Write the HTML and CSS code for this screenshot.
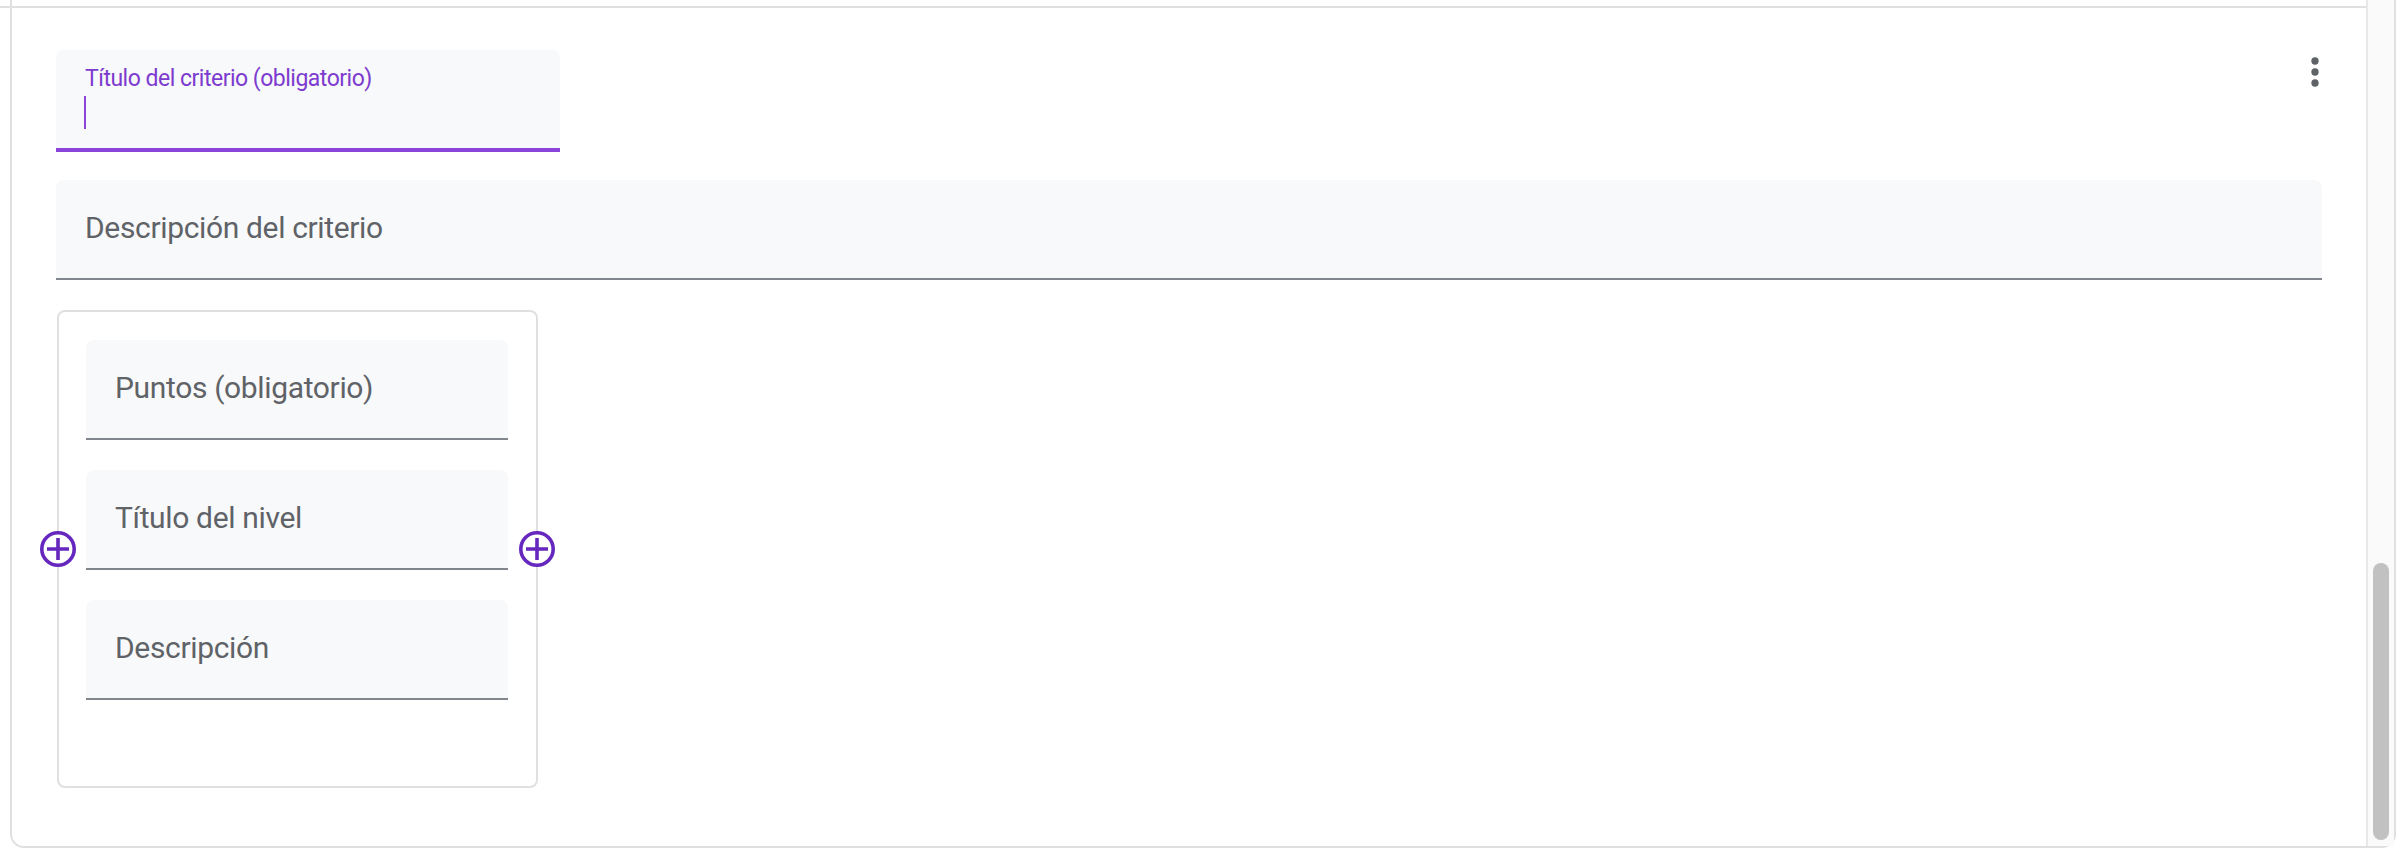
FILE: index.html
```html
<!DOCTYPE html>
<html lang="es">
<head>
<meta charset="utf-8">
<title>Criterio</title>
<link rel="stylesheet" href="styles.css">
</head>
<body>
<div class="frame">
  <div class="content">
    <div class="divider"></div>
    <div class="row-top">
      <div class="field field-focused title-field">
        <span class="float-label">Título del criterio (obligatorio)</span>
        <span class="caret"></span>
      </div>
      <button class="kebab" aria-label="Más opciones">
        <svg width="44" height="44" viewBox="0 0 24 24"><circle cx="12" cy="6" r="2"/><circle cx="12" cy="12" r="2"/><circle cx="12" cy="18" r="2"/></svg>
      </button>
    </div>
    <div class="field desc-field"><span class="placeholder">Descripción del criterio</span></div>
    <div class="level">
      <div class="field"><span class="placeholder">Puntos (obligatorio)</span></div>
      <div class="field"><span class="placeholder">Título del nivel</span></div>
      <div class="field"><span class="placeholder">Descripción</span></div>
      <button class="add add-left" aria-label="Añadir nivel antes">
        <svg width="40" height="40" viewBox="0 0 40 40"><circle cx="20" cy="20" r="16.2"/><path d="M9 20h22M20 9v22"/></svg>
      </button>
      <button class="add add-right" aria-label="Añadir nivel después">
        <svg width="40" height="40" viewBox="0 0 40 40"><circle cx="20" cy="20" r="16.2"/><path d="M9 20h22M20 9v22"/></svg>
      </button>
    </div>
  </div>
  <div class="scrollbar"><div class="thumb"></div></div>
</div>
</body>
</html>
```

FILE: styles.css
```css
html, body {
  margin: 0;
  padding: 0;
  background: #ffffff;
  font-family: Roboto, "Noto Sans", "Liberation Sans", sans-serif;
}

.frame {
  box-sizing: border-box;
  margin-left: 10px;
  width: 2386px;
  height: 848px;
  display: flex;
  border-left: 2px solid #e0e0e0;
  border-right: 2px solid #e0e0e0;
  border-bottom: 2px solid #e0e0e0;
  border-radius: 0 0 14px 14px;
}

.content {
  flex: 1;
  min-width: 0;
  padding: 0 44px;
  display: flex;
  flex-direction: column;
  align-items: flex-start;
}

.divider {
  align-self: stretch;
  height: 2px;
  margin: 6px -44px 0 -56px;
  background: #e0e0e0;
}

.row-top {
  align-self: stretch;
  margin-top: 42px;
  display: flex;
  justify-content: space-between;
  align-items: flex-start;
}

.field {
  box-sizing: border-box;
  height: 100px;
  background: #f8f9fa;
  border-bottom: 2px solid #80868b;
  border-radius: 8px 8px 0 0;
  padding: 30px 28px 0 29px;
}

.placeholder {
  display: block;
  font-size: 30px;
  line-height: 36px;
  letter-spacing: -0.35px;
  color: #5f6368;
  white-space: nowrap;
}

.title-field {
  width: 504px;
  height: 102px;
  border-bottom: 4px solid #8c43d9;
  padding-top: 15px;
}

.float-label {
  display: block;
  font-size: 23px;
  line-height: 27px;
  letter-spacing: -0.5px;
  color: #7d3bcf;
  white-space: nowrap;
}

.caret {
  display: block;
  width: 2px;
  height: 33px;
  margin-top: 4px;
  margin-left: -1px;
  background: #8c43d9;
}

.kebab {
  margin: 0 -15px 0 0;
  padding: 0;
  border: 0;
  background: none;
  width: 44px;
  height: 44px;
  display: flex;
}

.kebab svg {
  fill: #5f6368;
}

.desc-field {
  align-self: stretch;
  margin-top: 28px;
}

.level {
  position: relative;
  box-sizing: border-box;
  margin-top: 30px;
  margin-left: 1px;
  width: 481px;
  border: 2px solid #e0e0e0;
  border-radius: 8px;
  padding: 28px 28px 86px 27px;
  display: flex;
  flex-direction: column;
  gap: 30px;
}

.level .field {
  width: 422px;
}

.add {
  position: absolute;
  top: 50%;
  margin-top: -20px;
  width: 40px;
  height: 40px;
  padding: 0;
  border: 0;
  background: none;
  display: flex;
}

.add-left {
  left: -21px;
}

.add-right {
  right: -21px;
}

.add svg circle {
  fill: #ffffff;
  stroke: #6527bd;
  stroke-width: 3.6;
}

.add svg path {
  fill: none;
  stroke: #6527bd;
  stroke-width: 3.6;
}

.scrollbar {
  box-sizing: border-box;
  width: 28px;
  border-left: 2px solid #e8e8e8;
  background: #fafafa;
  display: flex;
  flex-direction: column;
  align-items: center;
}

.thumb {
  margin-top: 563px;
  width: 16px;
  height: 277px;
  border-radius: 8px;
  background: #c1c1c1;
}
```
